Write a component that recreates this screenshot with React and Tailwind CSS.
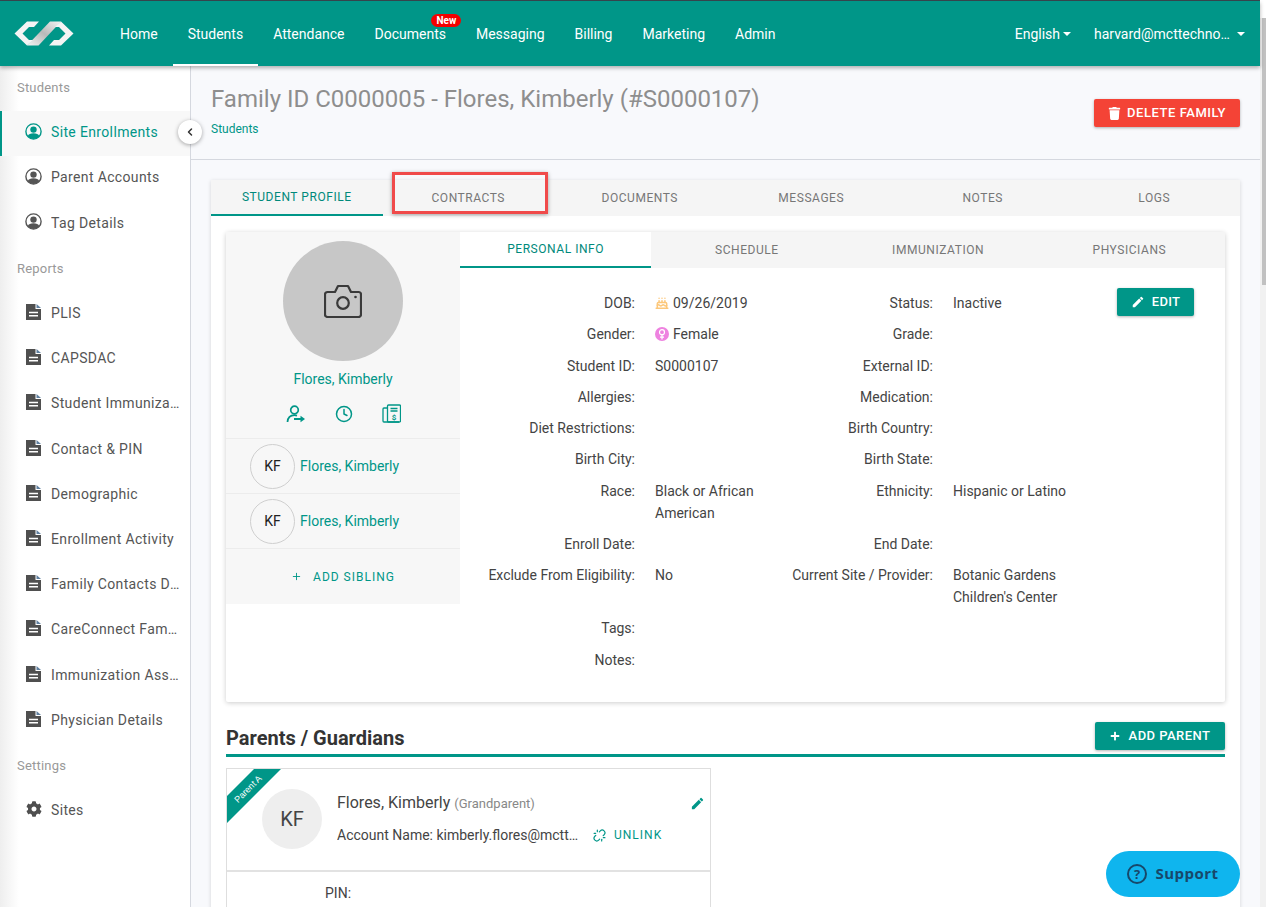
import React from "react";
import { Clock, Plus, Cake, ChevronLeft, Unlink } from "lucide-react";
import { FaCog, FaTrash, FaPlus } from "react-icons/fa";
import { MdEdit } from "react-icons/md";

const navItems = ["Home", "Students", "Attendance", "Documents", "Messaging", "Billing", "Marketing", "Admin"];

const sidebar = [
  { label: "Students", head: true },
  { label: "Site Enrollments", icon: "user", active: true },
  { label: "Parent Accounts", icon: "user" },
  { label: "Tag Details", icon: "user" },
  { label: "Reports", head: true },
  { label: "PLIS", icon: "file" },
  { label: "CAPSDAC", icon: "file" },
  { label: "Student Immunization", icon: "file" },
  { label: "Contact & PIN", icon: "file" },
  { label: "Demographic", icon: "file" },
  { label: "Enrollment Activity", icon: "file" },
  { label: "Family Contacts Details", icon: "file" },
  { label: "CareConnect Family", icon: "file" },
  { label: "Immunization Assessment", icon: "file" },
  { label: "Physician Details", icon: "file" },
  { label: "Settings", head: true },
  { label: "Sites", icon: "cog" },
];

const mainTabs = ["Student Profile", "Contracts", "Documents", "Messages", "Notes", "Logs"];
const innerTabs = ["Personal Info", "Schedule", "Immunization", "Physicians"];

const Logo = () => (
  <svg width="60" height="25" viewBox="0 0 60 25">
    <defs>
      <linearGradient id="band" x1="0" y1="1" x2="1" y2="0">
        <stop offset="0" stopColor="#f4f4f4" />
        <stop offset="0.5" stopColor="#b9b9b9" />
        <stop offset="1" stopColor="#f4f4f4" />
      </linearGradient>
    </defs>
    <path d="M36 0.5H47L24.5 24.5H13Z" fill="url(#band)" />
    <path d="M0.5 12.5L13 0.5H25L20 6H15L8.5 12.5L15 19H19L13 24.5Z" fill="#f4f4f4" />
    <path d="M59.5 12.5L47 24.5H35L40 19H45L51.5 12.5L45 6H41L47 0.5Z" fill="#f4f4f4" />
  </svg>
);

const UserRing = () => (
  <svg viewBox="0 0 17 17" width="17" height="17" fill="currentColor">
    <circle cx="8.5" cy="8.5" r="7.6" fill="none" stroke="currentColor" strokeWidth="1.4" />
    <circle cx="8.5" cy="6.6" r="3.2" />
    <path d="M2.6 13.2C3.6 11 5.6 10.2 8.5 10.2C11.4 10.2 13.4 11 14.4 13.2C13 15 10.9 16 8.5 16C6.1 16 4 15 2.6 13.2Z" />
  </svg>
);

const FileIcon = () => (
  <svg width="15" height="16" viewBox="0 0 15 16">
    <path d="M0 0H9.5V5H15V16H0Z" fill="#4f4f4f" />
    <path d="M10.5 0L15 4H10.5Z" fill="#5f7f9f" />
    <path d="M3 8.6H12M3 11.8H12" stroke="#fff" strokeWidth="1.5" />
  </svg>
);

const CameraIcon = () => (
  <svg width="38" height="34" viewBox="0 0 38 34" fill="none" stroke="#3a3a3a" strokeWidth="2.2" strokeLinejoin="round">
    <path d="M3.5 8H11L14 2H24L27 8H34.5A2.5 2.5 0 0 1 37 10.5V30.5A2.5 2.5 0 0 1 34.5 33H3.5A2.5 2.5 0 0 1 1 30.5V10.5A2.5 2.5 0 0 1 3.5 8Z" />
    <circle cx="19" cy="19" r="5.8" />
    <circle cx="31.5" cy="13" r="1.3" fill="#3a3a3a" stroke="none" />
  </svg>
);

const UserArrow = () => (
  <svg width="20" height="18" viewBox="0 0 20 18" fill="none" stroke="#009688" strokeWidth="1.7">
    <circle cx="8.5" cy="5" r="3.8" />
    <path d="M1.5 17C1.8 12.5 4.5 10.2 8.5 10.2C9.5 10.2 10.4 10.4 11 10.6" />
    <path d="M8 14H15" strokeWidth="2" />
    <path d="M14.5 10.8L19 14L14.5 17.2Z" fill="#009688" stroke="none" />
  </svg>
);

const Ledger = () => (
  <svg width="19" height="19" viewBox="0 0 19 19" fill="none" stroke="#009688" strokeWidth="1.3">
    <rect x="5.5" y="1" width="13" height="17" rx="1" />
    <path d="M5.5 4H2A1 1 0 0 0 1 5V17A1 1 0 0 0 2 18H17" />
    <path d="M8.5 4.5H15.5M8.5 7H15.5" />
    <text x="12" y="15.5" fontSize="8" fontWeight="700" textAnchor="middle" fill="#009688" stroke="none" fontFamily="Roboto, sans-serif">$</text>
  </svg>
);

const FemaleIcon = () => (
  <svg width="14" height="14" viewBox="0 0 14 14" fill="none">
    <circle cx="7" cy="7" r="7" fill="#ee82e0" />
    <circle cx="7" cy="5.2" r="2.5" stroke="#fff" strokeWidth="1.2" />
    <path d="M7 7.8V12.4M5 10.2H9" stroke="#fff" strokeWidth="1.2" />
  </svg>
);

const InfoLabel = ({ children }) => <div className="text-right leading-[22px]">{children}</div>;
const InfoValue = ({ children }) => <div className="leading-[22px]">{children}</div>;

const App = () => {
  return (
    <div className="relative flex h-[907px] w-full overflow-hidden font-['Roboto',sans-serif] text-sm text-[#444]">
      <div className="flex w-[1260px] shrink-0 flex-col bg-[#f8f9fc]">
        <div className="h-px bg-[#37474f]" />

        {/* Header */}
        <div className="z-20 flex h-[65px] shrink-0 items-center bg-[#009688] pl-[14px] pr-[15px] text-white shadow-[0_2px_4px_rgba(0,0,0,0.3)]">
          <Logo />
          <nav className="ml-[31px] flex h-full">
            {navItems.map((item) => (
              <div
                key={item}
                className={`relative flex h-full items-center px-[15px] ${
                  item === "Students" ? "border-b-2 border-white pt-[2px]" : ""
                }`}
              >
                {item}
                {item === "Documents" && (
                  <span className="absolute left-[72px] top-[13px] rounded-full bg-[#f50000] px-[5px] text-[10px] font-bold leading-[13px]">
                    New
                  </span>
                )}
              </div>
            ))}
          </nav>
          <div className="ml-auto flex items-center">
            <span>English</span>
            <span className="ml-[3px] mt-[1px] border-x-[4.5px] border-t-[4.5px] border-x-transparent border-t-white" />
            <span className="ml-[23px] w-[136px] truncate">harvard@mcttechnologies.com</span>
            <span className="ml-[7px] mt-[1px] border-x-[4.5px] border-t-[4.5px] border-x-transparent border-t-white" />
          </div>
        </div>

        <div className="flex min-h-0 flex-1">
          {/* Sidebar */}
          <aside className="relative w-[191px] shrink-0 border-r border-[#d5d8df] bg-gradient-to-r from-[#eeeeee] via-white via-[10%] to-white">
            {sidebar.map((row) =>
              row.head ? (
                <div key={row.label} className="flex h-[45.2px] items-center pl-[17px] pb-[1px] text-[13px] tracking-[0.2px] text-[#999]">
                  {row.label}
                </div>
              ) : (
                <div
                  key={row.label}
                  className={`flex h-[45.2px] items-center gap-[9px] pb-[3px] pr-[10px] tracking-[0.35px] ${
                    row.active ? "border-l-2 border-[#009688] bg-[#f8f8f8] pl-[23px] text-[#009688]" : "pl-[25px] text-[#555]"
                  }`}
                >
                  <span className="flex w-[17px] shrink-0 justify-center pb-[2px]">
                    {row.icon === "user" && <UserRing />}
                    {row.icon === "file" && <FileIcon />}
                    {row.icon === "cog" && <FaCog className="h-[16px] w-[16px] text-[#4f4f4f]" />}
                  </span>
                  <span className="truncate">{row.label}</span>
                </div>
              )
            )}
            <button className="absolute left-[178px] top-[54px] flex h-[24px] w-[24px] items-center justify-center rounded-full bg-white shadow-[0_1px_4px_rgba(0,0,0,0.35)]">
              <ChevronLeft size={12} strokeWidth={3} className="text-[#333]" />
            </button>
          </aside>

          {/* Main */}
          <main className="min-w-0 flex-1 bg-[#f8f9fc]">
            <div className="flex h-[94px] items-start justify-between border-b border-[#d5d8df] px-[20px]">
              <div>
                <h1 className="mt-[17px] text-2xl leading-[32px] text-[#8e8e8e]">
                  Family ID C0000005 - Flores, Kimberly (#S0000107)
                </h1>
                <div className="mt-[6px] text-xs text-[#009688]">Students</div>
              </div>
              <button className="mt-[33px] flex h-[28px] w-[146px] items-center justify-center gap-[6px] rounded-[2px] bg-[#f44336] text-[13px] font-medium tracking-[0.55px] text-white shadow-[0_1px_3px_rgba(0,0,0,0.3)]">
                <FaTrash size={13} />
                DELETE FAMILY
              </button>
            </div>

            <div className="mx-[20px] mt-[20px] bg-white shadow-[0_1px_4px_rgba(0,0,0,0.15)]">
              {/* Main tabs */}
              <div className="flex h-[36px] bg-[#f5f5f5]">
                {mainTabs.map((tab, i) => (
                  <div
                    key={tab}
                    className={`relative flex flex-1 items-center justify-center text-xs uppercase tracking-[0.55px] ${
                      i === 0 ? "border-b-2 border-[#009688] text-[#00897b]" : "text-[#777]"
                    }`}
                  >
                    {tab}
                    {tab === "Contracts" && (
                      <span className="absolute left-[9px] top-[-8px] h-[42px] w-[156px] border-[3px] border-[#f04a4a] shadow-[0_1px_4px_rgba(0,0,0,0.35)]" />
                    )}
                  </div>
                ))}
              </div>

              <div className="px-[15px] pt-[16px]">
                {/* Profile card */}
                <div className="flex h-[470px] rounded-[2px] bg-white shadow-[0_1px_5px_rgba(0,0,0,0.2)]">
                  <div className="h-[372px] w-[234px] shrink-0 bg-[#f7f7f7]">
                    <div className="flex h-[207px] flex-col items-center border-b border-[#ececec] pt-[9px]">
                      <div className="flex h-[120px] w-[120px] items-center justify-center rounded-full bg-[#c7c7c7]">
                        <CameraIcon />
                      </div>
                      <div className="mt-[8px] text-[#009688]">Flores, Kimberly</div>
                      <div className="mt-[15px] flex items-center gap-[29px]">
                        <UserArrow />
                        <Clock size={18} strokeWidth={2} className="text-[#009688]" />
                        <Ledger />
                      </div>
                    </div>
                    {[0, 1].map((i) => (
                      <div key={i} className="flex h-[55px] items-center gap-[5px] border-b border-[#ececec] pl-[24px]">
                        <div className="flex h-[45px] w-[45px] items-center justify-center rounded-full border border-[#cfcfcf] text-[#222]">
                          KF
                        </div>
                        <span className="text-[#009688]">Flores, Kimberly</span>
                      </div>
                    ))}
                    <div className="flex h-[55px] items-center justify-center gap-[11px] text-xs tracking-[1px] text-[#009688]">
                      <Plus size={11} strokeWidth={2} />
                      ADD SIBLING
                    </div>
                  </div>

                  <div className="min-w-0 flex-1">
                    <div className="flex h-[36px] bg-[#f5f5f5]">
                      {innerTabs.map((tab, i) => (
                        <div
                          key={tab}
                          className={`flex flex-1 items-center justify-center text-xs uppercase tracking-[0.55px] ${
                            i === 0 ? "border-b-2 border-[#009688] bg-white text-[#00897b]" : "text-[#777]"
                          }`}
                        >
                          {tab}
                        </div>
                      ))}
                    </div>
                    <div className="flex pt-[24px]">
                      <div className="grid grid-cols-[175px_115px_143px_130px] gap-x-5 gap-y-[9.25px] text-[#444]">
                        <InfoLabel>DOB:</InfoLabel>
                        <InfoValue>
                          <span className="flex items-center gap-[4px]">
                            <Cake size={14} strokeWidth={2.6} className="text-[#fcc77a]" />
                            09/26/2019
                          </span>
                        </InfoValue>
                        <InfoLabel>Status:</InfoLabel>
                        <InfoValue>Inactive</InfoValue>

                        <InfoLabel>Gender:</InfoLabel>
                        <InfoValue>
                          <span className="flex items-center gap-[4px]">
                            <FemaleIcon />
                            Female
                          </span>
                        </InfoValue>
                        <InfoLabel>Grade:</InfoLabel>
                        <InfoValue />

                        <InfoLabel>Student ID:</InfoLabel>
                        <InfoValue>S0000107</InfoValue>
                        <InfoLabel>External ID:</InfoLabel>
                        <InfoValue />

                        <InfoLabel>Allergies:</InfoLabel>
                        <InfoValue />
                        <InfoLabel>Medication:</InfoLabel>
                        <InfoValue />

                        <InfoLabel>Diet Restrictions:</InfoLabel>
                        <InfoValue />
                        <InfoLabel>Birth Country:</InfoLabel>
                        <InfoValue />

                        <InfoLabel>Birth City:</InfoLabel>
                        <InfoValue />
                        <InfoLabel>Birth State:</InfoLabel>
                        <InfoValue />

                        <InfoLabel>Race:</InfoLabel>
                        <InfoValue>Black or African American</InfoValue>
                        <InfoLabel>Ethnicity:</InfoLabel>
                        <InfoValue>Hispanic or Latino</InfoValue>

                        <InfoLabel>Enroll Date:</InfoLabel>
                        <InfoValue />
                        <InfoLabel>End Date:</InfoLabel>
                        <InfoValue />

                        <InfoLabel>Exclude From Eligibility:</InfoLabel>
                        <InfoValue>No</InfoValue>
                        <InfoLabel>Current Site / Provider:</InfoLabel>
                        <InfoValue>Botanic Gardens Children's Center</InfoValue>

                        <InfoLabel>Tags:</InfoLabel>
                        <InfoValue />
                        <InfoLabel />
                        <InfoValue />

                        <InfoLabel>Notes:</InfoLabel>
                        <InfoValue />
                        <InfoLabel />
                        <InfoValue />
                      </div>
                      <button className="ml-[34px] mt-[-4px] flex h-[28px] w-[77px] items-center justify-center gap-[7px] rounded-[2px] bg-[#009688] text-[13px] font-medium tracking-[0.3px] text-white shadow-[0_1px_3px_rgba(0,0,0,0.3)]">
                        <MdEdit size={14} />
                        EDIT
                      </button>
                    </div>
                  </div>
                </div>

                {/* Parents */}
                <div className="mt-[20px] flex h-[35px] items-start justify-between border-b-[3px] border-[#009688]">
                  <h2 className="mt-[2px] text-xl font-bold leading-[28px] text-[#333]">Parents / Guardians</h2>
                  <button className="flex h-[28px] w-[130px] items-center justify-center gap-[9px] rounded-[2px] bg-[#009688] text-[13px] font-medium tracking-[0.45px] text-white shadow-[0_1px_3px_rgba(0,0,0,0.3)]">
                    <FaPlus size={10} />
                    ADD PARENT
                  </button>
                </div>

                <div className="mt-[11px] w-[485px] border border-[#dedede]">
                  <div className="relative flex h-[103px] border-b-2 border-[#e2e2e2] pl-[35px] pt-[20px]">
                    <div className="absolute left-0 top-0 h-[54px] w-[54px] bg-[#009688] [clip-path:polygon(50%_0,100%_0,0_100%,0_50%)]" />
                    <span className="absolute left-[1px] top-[15px] w-[40px] rotate-[-45deg] text-center font-['Liberation_Sans',sans-serif] text-[9px] leading-[10px] text-white">
                      Parent A
                    </span>
                    <div className="z-10 flex h-[60px] w-[60px] shrink-0 items-center justify-center rounded-full bg-[#eeeeee] text-xl text-[#444]">
                      KF
                    </div>
                    <div className="ml-[15px] min-w-0 flex-1">
                      <div className="flex items-baseline pr-[5px] pt-[2px]">
                        <span className="text-base text-[#444]">Flores, Kimberly</span>
                        <span className="ml-[4px] text-[13px] text-[#888]">(Grandparent)</span>
                        <MdEdit size={15} className="ml-auto self-center text-[#009688]" />
                      </div>
                      <div className="mt-[10px] flex items-center">
                        <span className="w-[244px] truncate text-[#444]">Account Name: kimberly.flores@mcttechnologies.com</span>
                        <Unlink size={13} strokeWidth={2.2} className="ml-[12px] text-[#009688]" />
                        <span className="ml-[8px] text-xs tracking-[1px] text-[#009688]">UNLINK</span>
                      </div>
                    </div>
                  </div>
                  <div className="h-[60px] pl-[98px] pt-[11px] text-[#444]">PIN:</div>
                </div>
              </div>
            </div>
          </main>
        </div>
      </div>

      {/* Scrollbar */}
      <div className="flex flex-1 flex-col bg-[#f1f1f1]">
        <div className="h-[18px] bg-white" />
        <div className="ml-[2px] h-[267px] bg-[#c1c1c1]" />
      </div>

      <button className="absolute left-[1106px] top-[851px] z-30 flex h-[46px] w-[134px] items-center justify-center gap-[8px] rounded-full bg-[#0fb5ee] font-['Open_Sans',sans-serif] text-[15px] font-bold tracking-[0.5px] text-[#17486a]">
        <span className="flex h-[20px] w-[20px] items-center justify-center rounded-full border-2 border-[#17486a] text-[13px] leading-none">?</span>
        Support
      </button>
    </div>
  );
};

export default App;
